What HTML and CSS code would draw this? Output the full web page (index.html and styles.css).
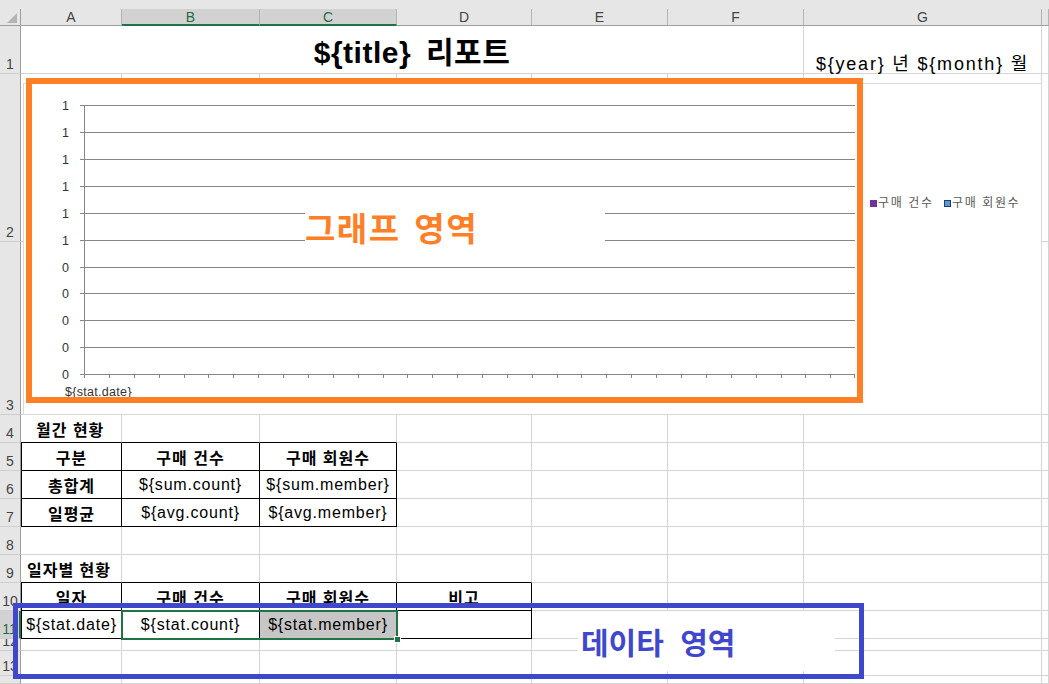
FILE: index.html
```html
<!DOCTYPE html>
<html lang="ko">
<head>
<meta charset="utf-8">
<title>report template</title>
<link rel="stylesheet" href="styles.css">
</head>
<body>
<div class="sheet">
  <div class="grid">
    <!-- column headers -->
    <div class="ch"><div class="chi corner"><span class="tri"></span></div></div>
    <div class="ch"><div class="chi">A</div></div>
    <div class="ch"><div class="chi sel">B</div></div>
    <div class="ch"><div class="chi sel">C</div></div>
    <div class="ch"><div class="chi">D</div></div>
    <div class="ch"><div class="chi">E</div></div>
    <div class="ch"><div class="chi">F</div></div>
    <div class="ch"><div class="chi">G</div></div>
    <div class="ch"><div class="chi"></div></div>

    <!-- row 1 -->
    <div class="rh">1</div>
    <div class="c title span6">${title} 리포트</div>
    <div class="c ym">${year} 년 ${month} 월</div>
    <div class="c"></div>

    <!-- row 2 -->
    <div class="rh">2</div>
    <div class="c"></div><div class="c"></div><div class="c"></div><div class="c"></div>
    <div class="c"></div><div class="c"></div><div class="c"></div><div class="c"></div>

    <!-- row 3 -->
    <div class="rh">3</div>
    <div class="c"></div><div class="c"></div><div class="c"></div><div class="c"></div>
    <div class="c"></div><div class="c"></div><div class="c"></div><div class="c"></div>

    <!-- row 4 -->
    <div class="rh">4</div>
    <div class="c lbl bb">월간 현황</div>
    <div class="c bb"></div><div class="c bb"></div>
    <div class="c"></div><div class="c"></div><div class="c"></div><div class="c"></div><div class="c"></div>

    <!-- row 5 -->
    <div class="rh">5</div>
    <div class="c tb tl hd">구분</div>
    <div class="c tb hd">구매 건수</div>
    <div class="c tb hd">구매 회원수</div>
    <div class="c"></div><div class="c"></div><div class="c"></div><div class="c"></div><div class="c"></div>

    <!-- row 6 -->
    <div class="rh">6</div>
    <div class="c tb tl hd">총합계</div>
    <div class="c tb">${sum.count}</div>
    <div class="c tb">${sum.member}</div>
    <div class="c"></div><div class="c"></div><div class="c"></div><div class="c"></div><div class="c"></div>

    <!-- row 7 -->
    <div class="rh">7</div>
    <div class="c tb tl hd">일평균</div>
    <div class="c tb">${avg.count}</div>
    <div class="c tb">${avg.member}</div>
    <div class="c"></div><div class="c"></div><div class="c"></div><div class="c"></div><div class="c"></div>

    <!-- row 8 -->
    <div class="rh">8</div>
    <div class="c"></div><div class="c"></div><div class="c"></div><div class="c"></div>
    <div class="c"></div><div class="c"></div><div class="c"></div><div class="c"></div>

    <!-- row 9 -->
    <div class="rh">9</div>
    <div class="c lbl lbl2 bb">일자별 현황</div>
    <div class="c bb"></div><div class="c bb"></div><div class="c bb"></div>
    <div class="c"></div><div class="c"></div><div class="c"></div><div class="c"></div>

    <!-- row 10 -->
    <div class="rh">10</div>
    <div class="c tb tl hd">일자</div>
    <div class="c tb hd">구매 건수</div>
    <div class="c tb hd">구매 회원수</div>
    <div class="c tb hd">비고</div>
    <div class="c"></div><div class="c"></div><div class="c"></div><div class="c"></div>

    <!-- row 11 -->
    <div class="rh sel">11</div>
    <div class="c tb tl">${stat.date}</div>
    <div class="c tb">${stat.count}</div>
    <div class="c tb gray">${stat.member}</div>
    <div class="c tb"></div>
    <div class="c"></div><div class="c"></div><div class="c"></div><div class="c"></div>

    <!-- row 12 -->
    <div class="rh">12</div>
    <div class="c"></div><div class="c"></div><div class="c"></div><div class="c"></div>
    <div class="c"></div><div class="c"></div><div class="c"></div><div class="c"></div>

    <!-- row 13 -->
    <div class="rh">13</div>
    <div class="c"></div><div class="c"></div><div class="c"></div><div class="c"></div>
    <div class="c"></div><div class="c"></div><div class="c"></div><div class="c"></div>

    <!-- row 14 (label cut off by the window) -->
    <div class="rh"></div>
    <div class="c"></div><div class="c"></div><div class="c"></div><div class="c"></div>
    <div class="c"></div><div class="c"></div><div class="c"></div><div class="c"></div>
  </div>

  <!-- floating chart object -->
  <div class="chart">
    <svg class="plot" width="1017" height="330" viewBox="24 84 1017 330">
      <g stroke="#868686" stroke-width="1" fill="none">
        <path d="M84 105.5H855M84 132.5H855M84 159.5H855M84 186.5H855M84 213.5H855M84 240.5H855M84 267.5H855M84 293.5H855M84 320.5H855M84 347.5H855M84 374.5H855"/>
        <path d="M80 105.5H84M80 132.5H84M80 159.5H84M80 186.5H84M80 213.5H84M80 240.5H84M80 267.5H84M80 293.5H84M80 320.5H84M80 347.5H84M80 374.5H84"/>
        <path d="M84.5 105V378"/>
        <path d="M109.5 374v4M134.5 374v4M159.5 374v4M184.5 374v4M208.5 374v4M233.5 374v4M258.5 374v4M283.5 374v4M308.5 374v4M333.5 374v4M358.5 374v4M383.5 374v4M407.5 374v4M432.5 374v4M457.5 374v4M482.5 374v4M507.5 374v4M532.5 374v4M557.5 374v4M581.5 374v4M606.5 374v4M631.5 374v4M656.5 374v4M681.5 374v4M706.5 374v4M731.5 374v4M756.5 374v4M781.5 374v4M805.5 374v4M830.5 374v4M854.5 374v4"/>
      </g>
      <g class="axis" text-anchor="end">
        <text x="69" y="110">1</text>
        <text x="69" y="137">1</text>
        <text x="69" y="164">1</text>
        <text x="69" y="191">1</text>
        <text x="69" y="218">1</text>
        <text x="69" y="245">1</text>
        <text x="69" y="272">0</text>
        <text x="69" y="298">0</text>
        <text x="69" y="325">0</text>
        <text x="69" y="352">0</text>
        <text x="69" y="379">0</text>
      </g>
      <text class="cat" x="65" y="396">${stat.date}</text>
      <rect x="870" y="200" width="7" height="7" fill="#7030a0"/>
      <text class="legend" x="878" y="207">구매 건수</text>
      <rect x="944.5" y="200.5" width="6" height="6" fill="#5b9bd5" stroke="#1f3f6e" stroke-width="1"/>
      <text class="legend" x="952" y="207">구매 회원수</text>
    </svg>
  </div>

  <div class="frame-o"></div>
  <div class="tbox-o">그래프 영역</div>

  <div class="selbox"><span class="handle"></span></div>

  <div class="tbox-b">데이타 영역</div>
  <div class="frame-b"></div>
</div>
</body>
</html>
```

FILE: styles.css
```css
* {
  box-sizing: border-box;
  margin: 0;
  padding: 0;
}

body {
  margin: 0;
  background: #ffffff;
  font-family: "Liberation Sans", "Noto Sans CJK KR", sans-serif;
  color: #000;
}

.sheet {
  position: relative;
  width: 1049px;
  height: 684px;
  overflow: hidden;
  background: #e6e6e6;
}

.grid {
  display: grid;
  grid-template-columns: 21px 101px 138px 137px 135px 136px 136px 238px 7px;
  grid-template-rows: 26px 48px 168px 173px repeat(8, 28px) 12px 25px 8px;
}

/* column headers */
.ch {
  padding-top: 9px;
  background: #e6e6e6;
}

.chi {
  position: relative;
  height: 17px;
  border-right: 1px solid #b4b4b4;
  border-bottom: 1px solid #9e9e9e;
  font-size: 14px;
  line-height: 16px;
  text-align: center;
  color: #444;
}

.chi.sel {
  background: #d2d2d2;
  border-bottom: 2px solid #217346;
  color: #1f6b44;
}

.chi.corner {
  border-right: 1px solid #9e9e9e;
}

.tri {
  position: absolute;
  right: 3px;
  bottom: 2px;
  width: 0;
  height: 0;
  border-left: 10px solid transparent;
  border-bottom: 10px solid #b4b4b4;
}

/* row headers */
.rh {
  background: #e6e6e6;
  border-right: 1px solid #9e9e9e;
  border-bottom: 1px solid #cfcfcf;
  font-size: 14px;
  line-height: 16px;
  display: flex;
  align-items: flex-end;
  justify-content: center;
  padding-bottom: 1px;
  color: #444;
  overflow: hidden;
}

.rh.sel {
  background: #d2d2d2;
  color: #1f6b44;
  border-right: 2px solid #217346;
}

/* cells */
.c {
  background: #fff;
  border-right: 1px solid #d4d4d4;
  border-bottom: 1px solid #d4d4d4;
  display: flex;
  align-items: center;
  justify-content: center;
  font-size: 16px;
  letter-spacing: 0.8px;
  white-space: nowrap;
}

.span6 {
  grid-column: span 6;
}

.title {
  font-size: 30px;
  font-weight: bold;
  letter-spacing: 0.5px;
  word-spacing: 6px;
}

.ym {
  font-size: 18px;
  line-height: 18px;
  letter-spacing: 1.8px;
  align-items: flex-end;
  padding-bottom: 0;
}

.lbl {
  justify-content: flex-start;
  font-weight: bold;
  letter-spacing: 1px;
  padding-left: 15px;
}

.lbl2 {
  padding-left: 6px;
}

.hd {
  font-weight: bold;
  letter-spacing: 1px;
}

.bb {
  border-bottom-color: #000;
}

.tb {
  border-right-color: #000;
  border-bottom-color: #000;
}

.tl {
  border-left: 1px solid #000;
}

.gray {
  background: #c6c6c6;
}

/* floating chart */
.chart {
  position: absolute;
  left: 23px;
  top: 83px;
  width: 1019px;
  height: 332px;
  background: #fff;
  border: 1px solid #d9d9d9;
}

.plot {
  display: block;
}

.axis {
  font-family: "Liberation Sans", sans-serif;
  font-size: 12.5px;
  fill: #333;
}

.cat {
  font-family: "Liberation Sans", sans-serif;
  font-size: 12.5px;
  letter-spacing: 0.3px;
  fill: #333;
}

.legend {
  font-family: "Noto Sans CJK KR", sans-serif;
  font-size: 12px;
  letter-spacing: 1.6px;
  fill: #595959;
}

/* painted annotation frames */
.frame-o {
  position: absolute;
  left: 26px;
  top: 78px;
  width: 837px;
  height: 325px;
  border: 6px solid #ff7f27;
}

.tbox-o {
  position: absolute;
  left: 305px;
  top: 199px;
  width: 300px;
  height: 56px;
  background: #fff;
  color: #ff7f27;
  font-family: "Noto Sans CJK KR", sans-serif;
  font-size: 33px;
  font-weight: bold;
  letter-spacing: 1.5px;
  word-spacing: 3px;
  display: flex;
  align-items: center;
  white-space: nowrap;
}

.selbox {
  position: absolute;
  left: 121px;
  top: 610px;
  width: 277px;
  height: 30px;
  border: 2px solid #217346;
}

.handle {
  position: absolute;
  right: -5px;
  bottom: -5px;
  width: 7px;
  height: 7px;
  background: #217346;
  border: 1px solid #fff;
}

.tbox-b {
  position: absolute;
  left: 578px;
  top: 611px;
  width: 257px;
  height: 60px;
  background: #fff;
  color: #3f48cc;
  font-family: "Noto Sans CJK KR", sans-serif;
  font-size: 30px;
  font-weight: bold;
  word-spacing: 8px;
  padding-left: 3px;
  display: flex;
  align-items: center;
  white-space: nowrap;
}

.frame-b {
  position: absolute;
  left: 13px;
  top: 603px;
  width: 851px;
  height: 76px;
  border: 5px solid #3f48cc;
}
```
